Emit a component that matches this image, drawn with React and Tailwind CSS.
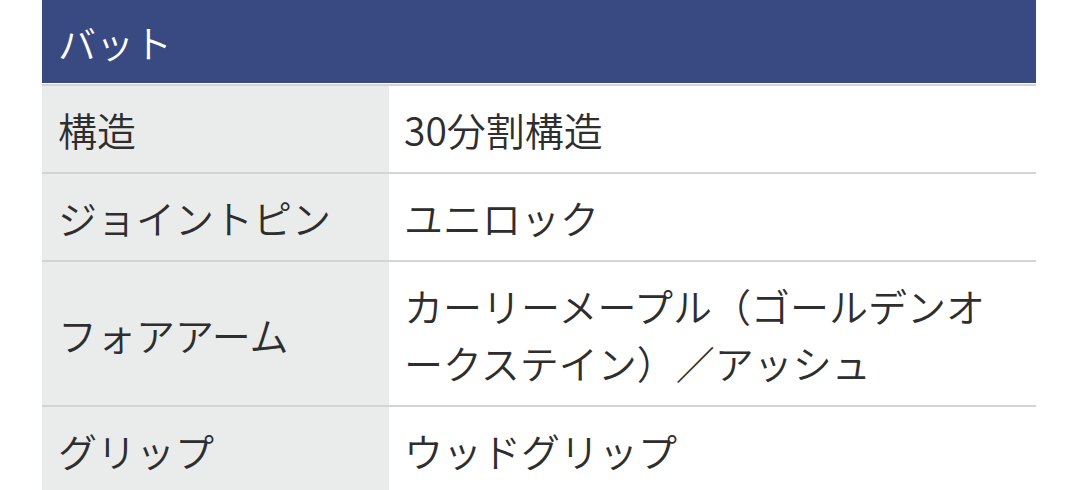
export default function App() {
  const rows = [
    ["構造", "30分割構造"],
    ["ジョイントピン", "ユニロック"],
    ["フォアアーム", "カーリーメープル（ゴールデンオークステイン）／アッシュ"],
    ["グリップ", "ウッドグリップ"],
  ];
  return (
    <div className="w-[1067px] h-[490px] overflow-hidden bg-white pl-[42px] pr-[31px]" style={{ fontFamily: '"Noto Sans CJK JP", "Noto Sans", sans-serif' }}>
      <div className="h-[83px] bg-[#394a82] text-white text-[38px] font-[350] leading-[83px] pl-[16px] mb-px">バット</div>
      {rows.map(([k, v], i) => (
        <div key={i} className="flex border-t-2 border-[#d4d4d4] text-[39px] font-[350] leading-[57px] text-[#2e2e2e]">
          <div className="w-[347px] shrink-0 bg-[#eaecec] pl-[16px] pt-[15px] pb-[14px] flex items-center">{k}</div>
          <div className="flex-1 pl-[15px] pr-[20px] pt-[15px] pb-[14px]">{v}</div>
        </div>
      ))}
    </div>
  );
}
